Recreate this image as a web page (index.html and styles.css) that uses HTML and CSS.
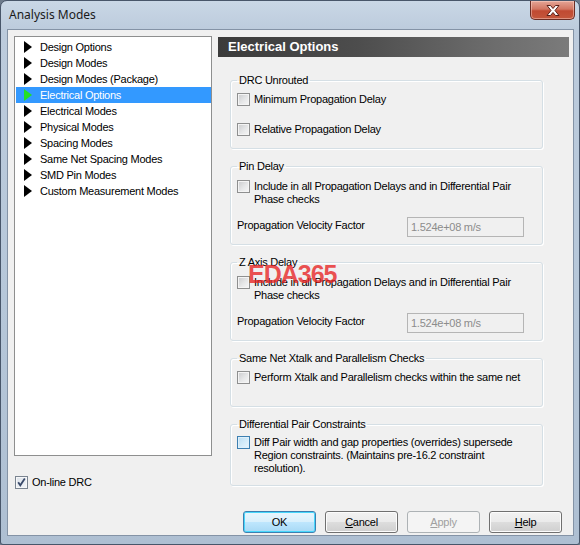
FILE: index.html
```html
<!DOCTYPE html>
<html>
<head>
<meta charset="utf-8">
<title>Analysis Modes</title>
<link rel="stylesheet" href="styles.css">
</head>
<body>
<div class="window">
  <div class="titlebar">
    <span class="title">Analysis Modes</span>
    <div class="close">
      <svg width="14" height="11" viewBox="0 0 14 11"><path d="M1 0.5 H4.5 L7 3.5 L9.5 0.5 H13 L9 5.5 L13 10.5 H9.5 L7 7.5 L4.5 10.5 H1 L5 5.5 Z" fill="#fff" stroke="#5a2018" stroke-width="1" stroke-linejoin="round"/></svg>
    </div>
  </div>
  <div class="client">
    <div class="body">
      <div class="left">
        <ul class="tree">
          <li class="item"><svg class="tri" width="8" height="12" viewBox="0 0 8 12"><polygon points="0,0 8,6 0,12"/></svg>Design Options</li>
          <li class="item"><svg class="tri" width="8" height="12" viewBox="0 0 8 12"><polygon points="0,0 8,6 0,12"/></svg>Design Modes</li>
          <li class="item"><svg class="tri" width="8" height="12" viewBox="0 0 8 12"><polygon points="0,0 8,6 0,12"/></svg>Design Modes (Package)</li>
          <li class="item selected"><svg class="tri" width="8" height="12" viewBox="0 0 8 12"><polygon points="0,0 8,6 0,12"/></svg>Electrical Options</li>
          <li class="item"><svg class="tri" width="8" height="12" viewBox="0 0 8 12"><polygon points="0,0 8,6 0,12"/></svg>Electrical Modes</li>
          <li class="item"><svg class="tri" width="8" height="12" viewBox="0 0 8 12"><polygon points="0,0 8,6 0,12"/></svg>Physical Modes</li>
          <li class="item"><svg class="tri" width="8" height="12" viewBox="0 0 8 12"><polygon points="0,0 8,6 0,12"/></svg>Spacing Modes</li>
          <li class="item"><svg class="tri" width="8" height="12" viewBox="0 0 8 12"><polygon points="0,0 8,6 0,12"/></svg>Same Net Spacing Modes</li>
          <li class="item"><svg class="tri" width="8" height="12" viewBox="0 0 8 12"><polygon points="0,0 8,6 0,12"/></svg>SMD Pin Modes</li>
          <li class="item"><svg class="tri" width="8" height="12" viewBox="0 0 8 12"><polygon points="0,0 8,6 0,12"/></svg>Custom Measurement Modes</li>
        </ul>
        <div class="check online">
          <span class="box checked"><svg width="11" height="11" viewBox="0 0 11 11"><path d="M2.2 5.2 L4.3 8.3 L8.8 1.6" fill="none" stroke="#3a4a6a" stroke-width="1.8"/></svg></span>
          <span class="label">On-line DRC</span>
        </div>
      </div>
      <div class="right">
        <div class="header">Electrical Options</div>
        <fieldset class="group g-drc">
          <legend>DRC Unrouted</legend>
          <div class="check first"><span class="box"></span><span class="label">Minimum Propagation Delay</span></div>
          <div class="check second"><span class="box"></span><span class="label">Relative Propagation Delay</span></div>
        </fieldset>
        <fieldset class="group g-delay">
          <legend>Pin Delay</legend>
          <div class="check first"><span class="box"></span><span class="label">Include in all Propagation Delays and in Differential Pair<br>Phase checks</span></div>
          <div class="field"><span class="flabel">Propagation Velocity Factor</span><span class="input">1.524e+08 m/s</span></div>
        </fieldset>
        <fieldset class="group g-delay">
          <legend>Z Axis Delay</legend>
          <div class="check first"><span class="box"></span><span class="label">Include in all Propagation Delays and in Differential Pair<br>Phase checks</span></div>
          <div class="field"><span class="flabel">Propagation Velocity Factor</span><span class="input">1.524e+08 m/s</span></div>
        </fieldset>
        <fieldset class="group g-xtalk">
          <legend>Same Net Xtalk and Parallelism Checks</legend>
          <div class="check first"><span class="box"></span><span class="label">Perform Xtalk and Parallelism checks within the same net</span></div>
        </fieldset>
        <fieldset class="group g-diff">
          <legend>Differential Pair Constraints</legend>
          <div class="check first"><span class="box hot"></span><span class="label">Diff Pair width and gap properties (overrides) supersede<br>Region constraints. (Maintains pre-16.2 constraint<br>resolution).</span></div>
        </fieldset>
      </div>
    </div>
    <div class="footer">
      <button class="btn default">OK</button>
      <button class="btn"><u>C</u>ancel</button>
      <button class="btn disabled"><u>A</u>pply</button>
      <button class="btn"><u>H</u>elp</button>
    </div>
  </div>
  <div class="watermark">EDA365</div>
</div>
</body>
</html>
```
FILE: styles.css
```css
html, body {
  margin: 0;
  padding: 0;
  background: #6d7b8c;
}
.window {
  position: relative;
  width: 580px;
  height: 545px;
  box-sizing: border-box;
  border: 1px solid #48566a;
  border-radius: 7px 7px 3px 3px;
  background: linear-gradient(180deg, #c9d7e6 0px, #bccbdc 30px, #b6c7d9 300px, #aebfd2 545px);
  padding: 0 5px 8px 6px;
  display: flex;
  flex-direction: column;
  font-family: "Liberation Sans", Arial, sans-serif;
  font-size: 11px;
  letter-spacing: -0.25px;
  color: #000;
}
.titlebar {
  height: 28px;
  flex: none;
  display: flex;
  justify-content: space-between;
  align-items: flex-start;
}
.title {
  font-family: "Noto Sans", "Open Sans", sans-serif;
  font-size: 12px;
  letter-spacing: 0;
  padding: 5px 0 0 2px;
  color: #1a1a1a;
}
.close {
  width: 45px;
  height: 19px;
  box-sizing: border-box;
  margin-right: -1px;
  border: 1px solid #6b2d24;
  border-top: none;
  border-radius: 0 0 5px 5px;
  background: linear-gradient(180deg, #e5a596 0%, #d27662 45%, #c04a32 55%, #c4573c 100%);
  box-shadow: inset 0 0 0 1px rgba(255, 220, 210, 0.45);
  display: flex;
  align-items: center;
  justify-content: center;
}
.client {
  flex: 1;
  border: 1px solid #8493a6;
  background: #f0f0f0;
  display: flex;
  flex-direction: column;
}
.body {
  display: flex;
  align-items: flex-start;
  padding-top: 6px;
}
.left {
  margin-left: 6px;
  width: 198px;
}
.tree {
  list-style: none;
  margin: 0;
  padding: 2px 0 0 0;
  height: 420px;
  box-sizing: border-box;
  border: 1px solid #8e8f8f;
  background: #fff;
}
.item {
  height: 16px;
  margin-left: 1px;
  padding-left: 8px;
  display: flex;
  align-items: center;
  gap: 8px;
  white-space: nowrap;
}
.tri {
  fill: #000;
  flex: none;
}
.item.selected {
  background: #3399ff;
  color: #fff;
}
.item.selected .tri {
  fill: #24e024;
}
.check {
  display: flex;
  align-items: flex-start;
  gap: 4px;
  line-height: 13px;
  white-space: nowrap;
}
.box {
  flex: none;
  width: 13px;
  height: 13px;
  box-sizing: border-box;
  border: 1px solid #8e8f8f;
  background: linear-gradient(135deg, #c9cacc 0%, #e6e7e8 55%, #f7f7f7 100%);
  box-shadow: inset 0 0 0 1px #f4f4f4;
  display: flex;
  align-items: center;
  justify-content: center;
}
.box.checked {
  border-color: #7a8490;
  background: linear-gradient(135deg, #dde3ea 0%, #f3f5f8 100%);
  box-shadow: inset 0 0 0 1px #f6f7f9;
}
.box.hot {
  border-color: #3c7fb1;
  background: linear-gradient(135deg, #b9dcf2 0%, #d6edfa 60%, #e6f4fc 100%);
  box-shadow: inset 0 0 0 1px #def0fb;
}
.online {
  margin: 20px 0 0 1px;
}
.right {
  margin-left: 6px;
  width: 351px;
}
.header {
  margin-top: 1px;
  height: 20px;
  line-height: 20px;
  padding-left: 10px;
  background: linear-gradient(90deg, #3b3b3b 0%, #4d4d4d 40%, #6a6a6a 75%, #7b7b7b 100%);
  color: #fff;
  font-weight: bold;
  font-size: 13px;
  letter-spacing: 0;
}
.group {
  margin: 10px 0 0 12px;
  width: 313px;
  box-sizing: border-box;
  padding: 0 6px;
  border: 1px solid #d5dfe5;
  border-radius: 3px;
  box-shadow: inset 1px 1px 0 #fff, 1px 1px 0 #fff;
  min-width: 0;
}
.g-drc {
  margin-top: 16px;
}
.group legend {
  padding: 0 2px;
  line-height: 14px;
  margin-left: 0;
}
.g-drc {
  padding-bottom: 12px;
}
.g-drc .first {
  margin-top: 6px;
}
.g-drc .second {
  margin-top: 17px;
}
.g-delay {
  padding-bottom: 7px;
}
.g-delay .first {
  margin-top: 7px;
}
.field {
  display: flex;
  align-items: center;
  margin-top: 11px;
}
.flabel {
  width: 170px;
  flex: none;
  padding-bottom: 5px;
}
.input {
  width: 117px;
  height: 20px;
  box-sizing: border-box;
  border: 1px solid #b5b5b5;
  background: #f0f0f0;
  color: #8c8c8c;
  line-height: 18px;
  padding-left: 3px;
}
.g-xtalk {
  padding-bottom: 22px;
}
.g-xtalk .first {
  margin-top: 6px;
}
.g-diff {
  padding-bottom: 10px;
}
.g-diff .first {
  margin-top: 5px;
}
.footer {
  margin-top: auto;
  display: flex;
  justify-content: flex-end;
  gap: 9px;
  padding: 0 11px 2px 0;
}
.btn {
  width: 73px;
  height: 22px;
  box-sizing: border-box;
  border: 1px solid #707070;
  border-radius: 3px;
  background: linear-gradient(180deg, #f2f2f2 0%, #ebebeb 48%, #dddddd 52%, #cfcfcf 100%);
  box-shadow: inset 0 0 0 1px #fcfcfc;
  font-family: "Liberation Sans", Arial, sans-serif;
  font-size: 11px;
  letter-spacing: -0.25px;
  color: #000;
  padding: 0;
}
.btn.default {
  border-color: #3c7fb1;
  box-shadow: inset 0 0 0 1px #48d7fb;
  background: linear-gradient(180deg, #eaf6fd 0%, #d9f0fc 48%, #bee6fd 52%, #a7d9f5 100%);
}
.btn.disabled {
  border-color: #adb2b5;
  background: #f4f4f4;
  box-shadow: none;
  color: #a0a0a0;
}
.watermark {
  position: absolute;
  left: 247px;
  top: 259px;
  font-family: "Liberation Sans", Arial, sans-serif;
  font-weight: bold;
  font-size: 25px;
  letter-spacing: -1px;
  color: rgba(232, 36, 36, 0.78);
  pointer-events: none;
}
```
